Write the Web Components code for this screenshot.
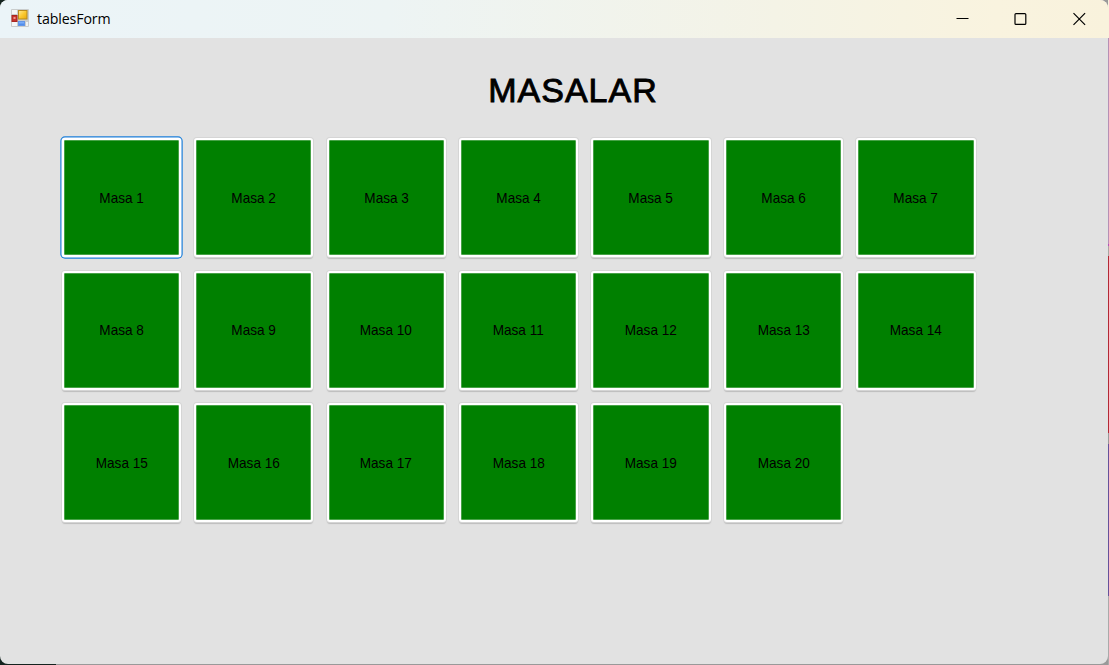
<!DOCTYPE html>
<html lang="tr">
<head>
<meta charset="utf-8">
<title>tablesForm</title>
<style>
html,body{margin:0;height:100%;overflow:hidden;background:linear-gradient(90deg,#7d868c,#bdbdbd)}
</style>
</head>
<body>
<form-window></form-window>
<script>
const define = (name, html, setup) => customElements.define(name, class extends HTMLElement {
  connectedCallback() {
    if (this.shadowRoot) return;
    const t = document.createElement('template');
    t.innerHTML = html;
    this.attachShadow({mode: 'open'}).append(t.content.cloneNode(true));
    if (setup) setup(this);
  }
});

define('form-icon', `<style>:host{display:block;width:18px;height:18px;margin-bottom:2px}svg{display:block}</style>
<svg width="18" height="18" viewBox="0 0 18 18">
<defs><linearGradient id="y" x2="1" y2="1"><stop stop-color="#ffe995"/><stop offset=".5" stop-color="#fbc92f"/><stop offset="1" stop-color="#e7a90c"/></linearGradient>
<linearGradient id="b" x2="0" y2="1"><stop stop-color="#8dbcff"/><stop offset="1" stop-color="#3c7ee6"/></linearGradient></defs>
<rect width="18" height="18" rx="1" fill="#c9cccc"/>
<rect x="1" y="1" width="5" height="4" fill="#f4f6f6"/><rect x="1" y="13" width="5" height="4" fill="#f4f6f6"/><rect x="15" y="13" width="2" height="4" fill="#f0f2f2"/>
<rect x="1" y="6.5" width="5" height="6" fill="#c8322c" stroke="#a82620"/><rect x="2.5" y="8" width="2" height="2" fill="#ee9588"/>
<rect x="7.5" y="1.5" width="8.5" height="8.5" fill="url(#y)" stroke="#b98b1c"/>
<rect x="7.5" y="12.5" width="6" height="4" fill="url(#b)" stroke="#6296e6"/></svg>`);

define('title-bar', `<style>
:host{display:flex;align-items:center;height:38px;box-sizing:border-box;padding-left:11px;background:linear-gradient(90deg,#ebf4f8 0%,#edf4f4 35%,#f4f3e6 70%,#f9f3df 90%,#f9f2dc 100%);color:#000}
.name{margin-left:8px;flex:1;font:14.2px/20px "Open Sans","Noto Sans",sans-serif;letter-spacing:-.12px;white-space:nowrap}
.controls{display:flex;margin-right:-1px}
.controls svg{display:block;width:58.5px;height:38px}
</style><form-icon></form-icon><span class="name"><slot></slot></span>
<div class="controls">
<svg viewBox="0 0 58.5 38" fill="none" stroke="#000"><path d="M22.5 18.5h12" /></svg>
<svg viewBox="0 0 58.5 38" fill="none" stroke="#000" stroke-width="1.2"><rect x="23" y="13.6" width="10.8" height="10.8" rx="1"/></svg>
<svg viewBox="0 0 58.5 38" fill="none" stroke="#000" stroke-width="1.2"><path d="M22.5 13.2l11.6 11.6M34.1 13.2L22.5 24.8"/></svg></div>`);

define('table-button', `<style>
:host{display:block;height:119px}
button{display:flex;align-items:center;justify-content:center;width:100%;height:119px;box-sizing:border-box;margin:0;padding:0;border:2px solid #fff;border-radius:3px;background:#008000;box-shadow:inset 0 0 0 .5px #8dc58d,0 0 0 1px #d5d5d5,0 1.5px 1px #bdbdbd;color:#000;font:15px/18px "Liberation Sans",Arial,sans-serif;outline:0}
:host([focused]) button{box-shadow:inset 0 0 0 .5px #8dc58d,0 0 0 .5px #fff,0 0 0 1.7px #1c7fda}
span{display:block;white-space:nowrap;transform:scaleX(.905)}
</style><button type="button"><span><slot></slot></span></button>`);

define('table-grid', `<style>:host{display:grid;grid-template-columns:repeat(7,119.3px);gap:13.45px 13.15px;justify-content:start}</style>`, el => {
  for (let i = 1; i <= 20; i++) {
    const b = document.createElement('table-button');
    b.textContent = 'Masa ' + i;
    if (i === 1) b.setAttribute('focused', '');
    el.shadowRoot.append(b);
  }
});

define('form-heading', `<style>:host{display:block;text-align:center;padding-left:38px;font:34px/40px "Liberation Sans",Arial,sans-serif;letter-spacing:1px;color:#000;-webkit-text-stroke:.9px #000}</style><slot></slot>`);

define('form-window', `<style>
:host{display:grid;grid-template-columns:1108px 1px;height:665px;background:linear-gradient(90deg,#14231f 56px,#999 56px)}
.window{display:flex;flex-direction:column;height:664px;border-radius:8px;overflow:hidden;background:#e2e2e2}
.content{padding:32px 0 0 61.7px;flex:1}
form-heading{margin-left:-61.7px;height:40px}
table-grid{margin-top:28.4px}
.edge{background:linear-gradient(#f9f2dc 0 38px,#b690b5 38px 244px,#b94cbb 244px 246px,#aaa7a2 246px 256px,#b32935 256px 433px,#999 433px 444px,#66529b 444px 596px,#aaa 596px)}
</style><div class="window"><title-bar>tablesForm</title-bar><div class="content"><form-heading>MASALAR</form-heading><table-grid></table-grid></div></div><div class="edge"></div>`);
</script>
</body>
</html>
